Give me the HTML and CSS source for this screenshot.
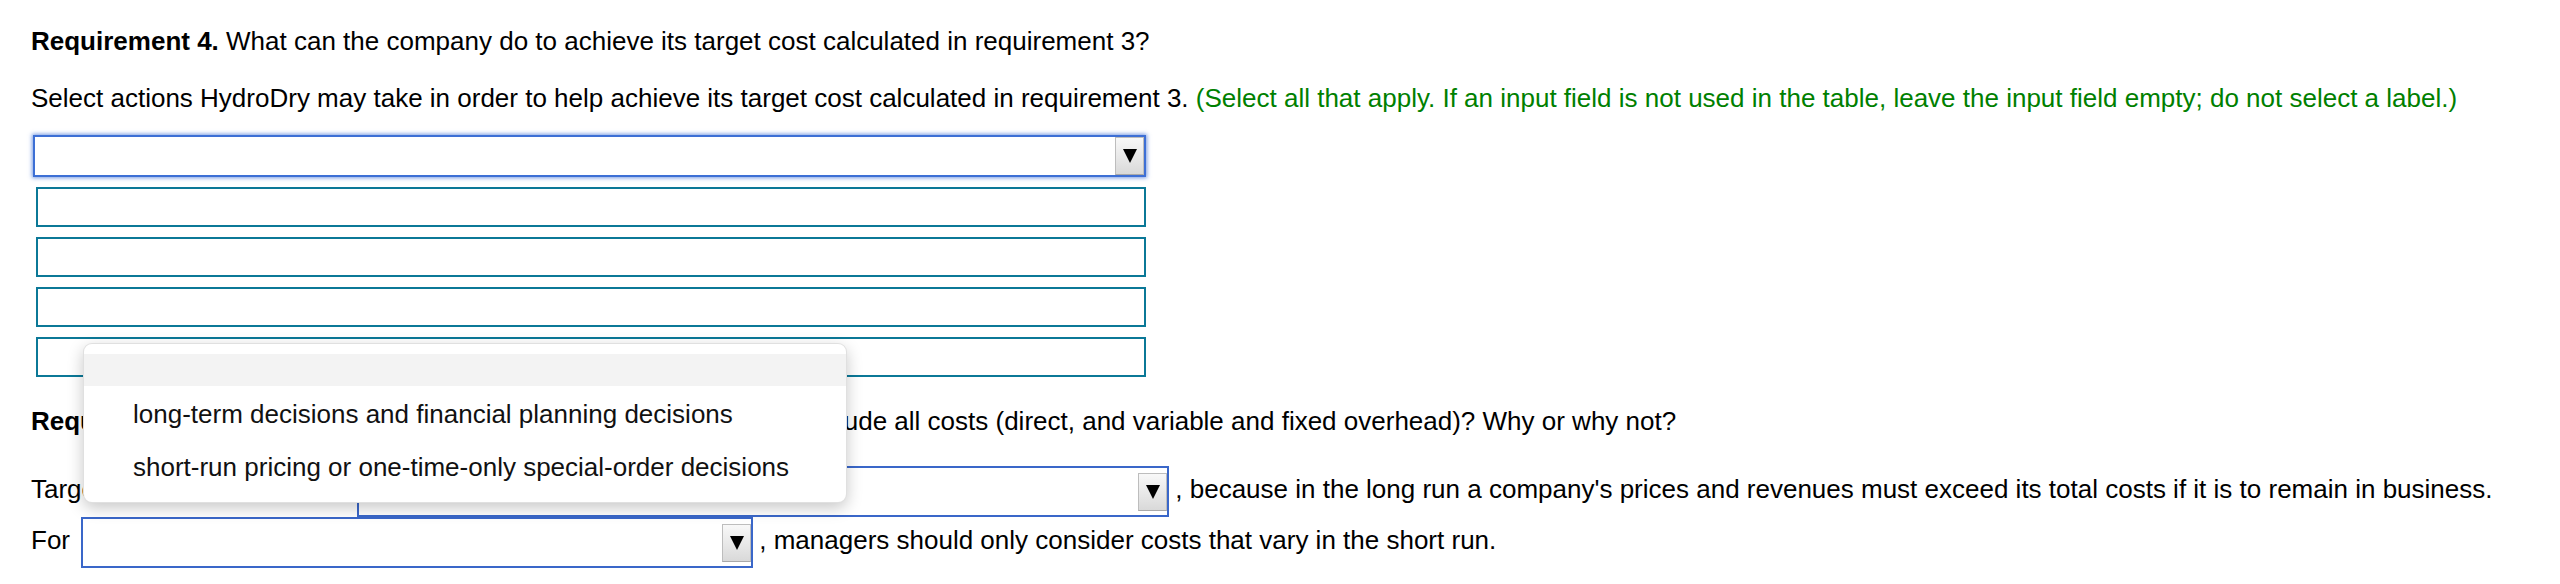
FILE: index.html
```html
<!DOCTYPE html>
<html lang="en">
<head>
<meta charset="utf-8">
<title>Requirement 4</title>
<link rel="stylesheet" href="styles.css">
</head>
<body>
<div class="page">
  <p class="q first"><b>Requirement 4.</b> What can the company do to achieve its target cost calculated in requirement 3?</p>
  <p class="q second">Select actions HydroDry may take in order to help achieve its target cost calculated in requirement 3. <span class="hint">(Select all that apply. If an input field is not used in the table, leave the input field empty; do not select a label.)</span></p>

  <div class="answers">
    <div class="select focused"><span class="btn"></span></div>
    <div class="field"></div>
    <div class="field"></div>
    <div class="field"></div>
    <div class="field"></div>
  </div>

  <p class="q req5"><b>Requirement 5.</b> Should HydroDry's long-run target pricing choices include all costs (direct, and variable and fixed overhead)? Why or why not?</p>

  <p class="q line target">Target prices are helpful for <span class="select inline wide"><span class="btn"></span></span>, because in the long run a company's prices and revenues must exceed its total costs if it is to remain in business.</p>
  <p class="q line">For <span class="select inline narrow"><span class="btn"></span></span>, managers should only consider costs that vary in the short run.</p>

  <div class="popup">
    <div class="opt-empty"></div>
    <div class="opt">long-term decisions and financial planning decisions</div>
    <div class="opt">short-run pricing or one-time-only special-order decisions</div>
  </div>
</div>
</body>
</html>
```

FILE: styles.css
```css
html, body {
  margin: 0;
  padding: 0;
  background: #ffffff;
}

.page {
  position: relative;
  padding: 26px 0 0 31px;
  font-family: "Liberation Sans", Arial, Helvetica, sans-serif;
  font-size: 26px;
  line-height: 30px;
  color: #000;
}

.q {
  margin: 0;
  white-space: nowrap;
}

.q b {
  font-weight: bold;
}

.second {
  margin-top: 27px;
}

.hint {
  color: #008000;
}

.answers {
  margin-top: 22px;
  display: flex;
  flex-direction: column;
  gap: 10px;
}

.select {
  box-sizing: border-box;
  border: 2px solid #3a67c9;
  background: #fff;
  display: flex;
  justify-content: flex-end;
  align-items: center;
}

.select.focused {
  margin-left: 2px;
  width: 1113px;
  height: 42px;
  border-color: #3d6fd5;
  box-shadow: 0 0 4px 1px rgba(61, 111, 213, 0.7);
}

.field {
  box-sizing: border-box;
  margin-left: 5px;
  width: 1110px;
  height: 40px;
  border: 2px solid #0b7897;
  background: #fff;
}

.btn {
  box-sizing: border-box;
  width: 29px;
  height: 38px;
  border: 1px solid #bdbdbd;
  border-bottom-color: #a9a9a9;
  background: linear-gradient(#f8f8f8, #e6e6e6 60%, #d9d9d9);
  display: flex;
  align-items: center;
  justify-content: center;
}

.btn::after {
  content: "";
  width: 0;
  height: 0;
  border-left: 7px solid transparent;
  border-right: 7px solid transparent;
  border-top: 14px solid #000;
}

.req5 {
  margin-top: 29px;
}

.target {
  margin-top: 30px;
}

.select.inline {
  display: inline-flex;
  vertical-align: middle;
  height: 51px;
  margin: 0 6px 0 4px;
}

.select.wide {
  width: 812px;
}

.select.narrow {
  width: 672px;
}

.popup {
  position: absolute;
  left: 83px;
  top: 343px;
  box-sizing: border-box;
  width: 764px;
  height: 160px;
  padding: 10px 0 12px;
  background: #fff;
  border: 1px solid rgba(0, 0, 0, 0.12);
  border-radius: 9px;
  box-shadow: 0 5px 16px rgba(0, 0, 0, 0.22);
  overflow: hidden;
}

.opt-empty {
  height: 32px;
  background: #f3f3f3;
}

.opt {
  box-sizing: border-box;
  height: 53px;
  padding: 13px 0 10px 49px;
  line-height: 30px;
  color: #111;
  white-space: nowrap;
}
```
